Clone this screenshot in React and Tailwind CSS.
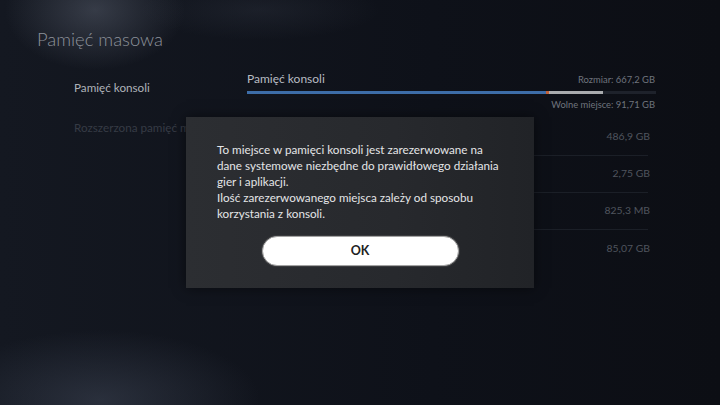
import React from 'react';

const rows = ['486,9 GB', '2,75 GB', '825,3 MB', '85,07 GB'];

const StoragePanel = () => (
    <div className="w-[409px] pt-[71px]">
        <div className="flex items-end justify-between">
            <span className="text-[12px] text-[#b8bcc3] leading-[16px]">Pamięć konsoli</span>
            <span className="text-[9.4px] text-[#6f747d] leading-[14px] mr-[1px]">Rozmiar: 667,2 GB</span>
        </div>
        <div className="mt-[4px] flex h-[3px] w-full bg-[#1e222b]">
            <div className="h-full w-[299px] bg-[#3d6da8]" />
            <div className="h-full w-[3px] bg-[#c0613a]" />
            <div className="h-full w-[54px] bg-[#a9abae]" />
        </div>
        <div className="mt-[4px] text-right text-[9.4px] text-[#6f747d] leading-[14px] mr-[1px]">
            Wolne miejsce: 91,71 GB
        </div>
        <div className="mt-[7px] pr-[8px]">
            {rows.map((r, i) => (
                <div
                    key={r}
                    className={`h-[37px] flex items-center justify-end text-[10.4px] text-[#50555e] ${i < rows.length - 1 ? 'border-b border-[#1b1f27]' : ''}`}
                >
                    <span className="mr-[-2px]">{r}</span>
                </div>
            ))}
        </div>
    </div>
);

const Dialog = () => (
    <div className="absolute left-[186px] top-[117px] w-[348px] h-[171px] bg-[linear-gradient(90deg,#2c2e32_0%,#27292d_60%,#212327_100%)] shadow-[0_0_12px_rgba(0,0,0,0.5)] px-[31px] pt-[24px]">
        <p className="text-[11.7px] leading-[16px] text-[#e4e5e7] whitespace-nowrap">
            To miejsce w pamięci konsoli jest zarezerwowane na
            <br />
            dane systemowe niezbędne do prawidłowego działania
            <br />
            gier i aplikacji.
            <br />
            Ilość zarezerwowanego miejsca zależy od sposobu
            <br />
            korzystania z konsoli.
        </p>
        <div className="mt-[15px] flex justify-center">
            <button className="w-[197px] h-[30px] rounded-full bg-white border-[1.5px] border-[#a3a3a3] shadow-[0_0_0_1px_#3a3b3e] text-[12.5px] font-bold text-[#222]">
                OK
            </button>
        </div>
    </div>
);

export default function App() {
    return (
        <div
            className="relative w-[720px] h-[405px] overflow-hidden bg-[#0e1118] bg-[radial-gradient(ellipse_90px_60px_at_95px_10px,rgba(120,128,145,0.35),transparent),radial-gradient(ellipse_120px_30px_at_260px_10px,rgba(90,98,115,0.15),transparent),radial-gradient(ellipse_160px_70px_at_100px_400px,rgba(70,78,95,0.45),transparent),linear-gradient(90deg,#141821_0%,#0e1119_60%,#0c0e14_100%)]"
            style={{ fontFamily: 'Lato, "Open Sans", sans-serif' }}
        >
            <div className="flex">
                <div className="w-[247px] pl-[37px] pt-[28px]">
                    <h1 className="text-[18.4px] font-light text-[#8d929b] leading-[22px]">Pamięć masowa</h1>
                    <div className="pl-[37px] mt-[29px] text-[11.7px] text-[#aeb2b9] leading-[16px]">Pamięć konsoli</div>
                    <div className="pl-[37px] mt-[24px] text-[11.7px] text-[#363b45] leading-[16px] whitespace-nowrap">Rozszerzona pamięć masowa</div>
                </div>
                <StoragePanel />
            </div>
            <Dialog />
        </div>
    );
}
